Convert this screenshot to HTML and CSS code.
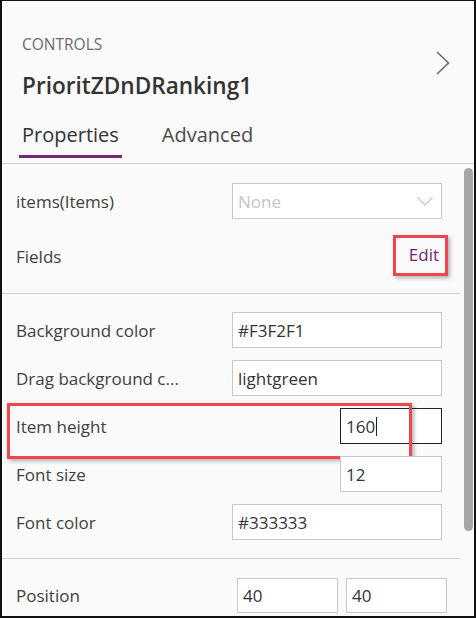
FILE: index.html
```html
<!DOCTYPE html>
<html lang="en">
<head>
<meta charset="utf-8">
<title>Controls - PrioritZDnDRanking1</title>
<link rel="stylesheet" href="styles.css">
</head>
<body>
<div class="panel">
  <header class="head">
    <div class="head-top">
      <div class="head-text">
        <div class="eyebrow">CONTROLS</div>
        <div class="title">PrioritZDnDRanking1</div>
      </div>
      <svg class="chev" width="14" height="24" viewBox="0 0 14 24" aria-hidden="true">
        <path d="M1 1 L12.5 12 L1 23" fill="none" stroke="#6b6b6b" stroke-width="1.6"/>
      </svg>
    </div>
    <nav class="tabs">
      <span class="tab active">Properties</span>
      <span class="tab">Advanced</span>
    </nav>
  </header>
  <div class="body">
    <div class="content">
      <section class="section s1">
        <div class="row">
          <span class="label">items(Items)</span>
          <div class="box wide select">
            <span class="placeholder">None</span>
            <svg class="down" width="16" height="9" viewBox="0 0 16 9" aria-hidden="true">
              <path d="M0.5 0.5 L8 8 L15.5 0.5" fill="none" stroke="#c4c4c4" stroke-width="1.2"/>
            </svg>
          </div>
        </div>
        <div class="row fields">
          <span class="label">Fields</span>
          <span class="edit">Edit</span>
        </div>
      </section>
      <section class="section s2">
        <div class="row">
          <span class="label">Background color</span>
          <div class="box wide">#F3F2F1</div>
        </div>
        <div class="row">
          <span class="label">Drag background c...</span>
          <div class="box wide">lightgreen</div>
        </div>
        <div class="row flag">
          <span class="label">Item height</span>
          <div class="box small focus">160<span class="caret"></span></div>
        </div>
        <div class="row">
          <span class="label">Font size</span>
          <div class="box small">12</div>
        </div>
        <div class="row">
          <span class="label">Font color</span>
          <div class="box wide">#333333</div>
        </div>
      </section>
      <section class="section s3">
        <div class="row">
          <span class="label">Position</span>
          <div class="pair">
            <div class="box half">40</div>
            <div class="box half">40</div>
          </div>
        </div>
      </section>
    </div>
    <div class="scroll"><div class="thumb"></div></div>
  </div>
</div>
</body>
</html>
```
FILE: styles.css
```css
* { box-sizing: border-box; }
html, body { margin: 0; padding: 0; }
body {
  font-family: "Open Sans", "Noto Sans", sans-serif;
  background: #ffffff;
}
.panel {
  width: 476px;
  height: 618px;
  background: #fafafa;
  border-style: solid;
  border-color: #111;
  border-width: 1px 2px 2px 2px;
  overflow: hidden;
  color: #404040;
}
.head {
  border-bottom: 1px solid #d2d2d2;
  padding: 0 0 5px 0;
}
.head-top {
  display: flex;
  align-items: center;
  justify-content: space-between;
  padding: 33px 24px 0 20px;
}
.eyebrow {
  font-size: 15.5px;
  line-height: 20px;
  color: #6a6a6a;
}
.title {
  margin-top: 17px;
  font-size: 22.6px;
  line-height: 30px;
  font-weight: 600;
  color: #333;
}
.chev { display: block; margin-top: -10px; }
.tabs {
  display: flex;
  gap: 37px;
  margin-top: 20px;
  padding-left: 17px;
}
.tab {
  font-size: 20px;
  line-height: 28px;
  padding: 0 3px 6px;
  border-bottom: 3px solid transparent;
  color: #4a4a4a;
}
.tab.active {
  color: #333;
  font-weight: 500;
  border-bottom-color: #742774;
}
.body {
  display: flex;
}
.content {
  flex: 1;
}
.scroll {
  width: 14px;
  padding: 4px 1px 0 4px;
}
.thumb {
  width: 9px;
  height: 363px;
  background: #a6a6a6;
  border-radius: 5px;
}
.section {
  display: flex;
  flex-direction: column;
  gap: 12px;
  padding: 18px 18px 18px 14px;
  border-bottom: 1px solid #d2d2d2;
}
.section.s1 { padding-top: 19px; padding-bottom: 16px; }
.section.s3 { padding-right: 13px; border-bottom: none; }
.row {
  display: flex;
  align-items: center;
  justify-content: space-between;
  height: 36px;
  position: relative;
}
.row.fields { height: 46px; padding-top: 4px; }
.label {
  font-size: 17px;
  color: #404040;
  white-space: nowrap;
}
.box {
  height: 36px;
  border: 1px solid #c8c8c8;
  background: #fff;
  font-size: 17px;
  color: #333;
  display: flex;
  align-items: center;
  padding: 0 5px;
  white-space: nowrap;
}
.box.wide { width: 210px; }
.box.small { width: 102px; }
.box.half { width: 101px; height: 35px; }
.pair { display: flex; gap: 8px; }
.box.focus { border-color: #222; }
.caret {
  display: inline-block;
  width: 1px;
  height: 19px;
  background: #222;
  margin-left: 1px;
}
.select { justify-content: space-between; padding-right: 8px; }
.placeholder { color: #c4c4c4; }
.down { display: block; }
.edit {
  position: relative;
  font-size: 17px;
  color: #742774;
  margin-right: 3px;
  margin-top: -3px;
}
.edit::after {
  content: "";
  position: absolute;
  left: -16px;
  right: -9px;
  top: -8px;
  bottom: -10px;
  border: 3px solid #f0454b;
  box-shadow: 2px 2px 4px rgba(0,0,0,0.3);
}
.row.flag::after {
  content: "";
  position: absolute;
  left: -9px;
  top: -5px;
  width: 399px;
  height: 50px;
  border: 3px solid #f0454b;
  box-shadow: 2px 2px 4px rgba(0,0,0,0.3);
  pointer-events: none;
}
```
